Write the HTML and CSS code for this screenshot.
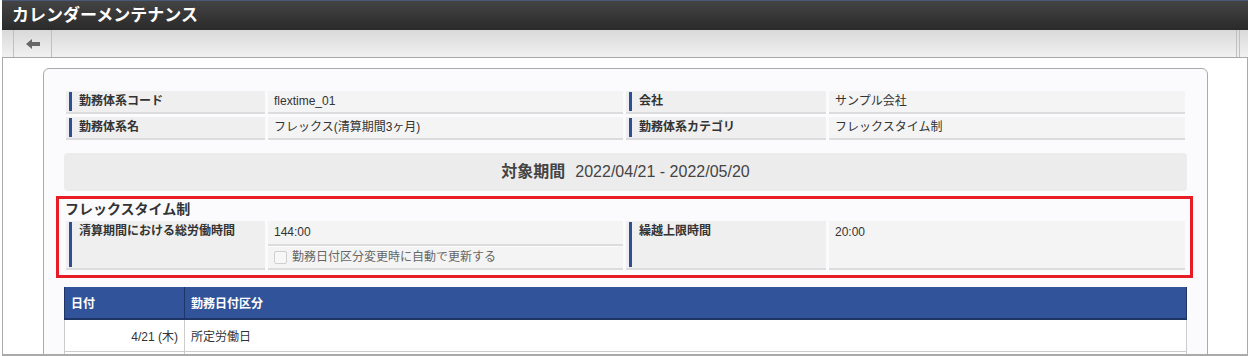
FILE: index.html
```html
<!DOCTYPE html>
<html lang="ja">
  <head>
    <meta charset="UTF-8" />
    <title>カレンダーメンテナンス</title>
    <link rel="stylesheet" href="styles.css">
  </head>
  <body>
    <div class="app">
      <div class="titlebar">カレンダーメンテナンス</div>
      <div class="toolbar">
        <div class="toolbar-button">
          <svg width="14" height="10" viewBox="0 0 14 10">
            <path d="M0 5 L6 0 V3 H14 V7 H6 V10 Z" fill="#666" />
          </svg>
        </div>
        <div class="toolbar-end"></div>
      </div>

      <div class="main">
        <div class="card">
          <div class="info-grid">
            <div class="label"><span>勤務体系コード</span></div>
            <div class="value">flextime_01</div>
            <div class="label"><span>会社</span></div>
            <div class="value">サンプル会社</div>

            <div class="label"><span>勤務体系名</span></div>
            <div class="value">フレックス(清算期間3ヶ月)</div>
            <div class="label"><span>勤務体系カテゴリ</span></div>
            <div class="value">フレックスタイム制</div>
          </div>

          <div class="period"><strong>対象期間</strong>2022/04/21 - 2022/05/20</div>

          <div class="flex-section">
            <h2 class="section-title">フレックスタイム制</h2>
            <div class="info-grid">
              <div class="label"><span>清算期間における総労働時間</span></div>
              <div class="value-stack">
                <div class="value value-top">144:00</div>
                <div class="value value-muted"><span class="checkbox"></span>勤務日付区分変更時に自動で更新する</div>
              </div>
              <div class="label"><span>繰越上限時間</span></div>
              <div class="value value-top">20:00</div>
            </div>
          </div>

          <table class="calendar">
            <tr>
              <th class="col-date">日付</th>
              <th>勤務日付区分</th>
            </tr>
            <tr>
              <td class="col-date">4/21 (木)</td>
              <td>所定労働日</td>
            </tr>
            <tr>
              <td class="col-date"></td>
              <td></td>
            </tr>
          </table>
        </div>
      </div>
    </div>
  </body>
</html>
```

FILE: styles.css
```css
* {
  margin: 0;
  padding: 0;
  box-sizing: border-box;
}

body {
  font-family: "Liberation Sans", "Noto Sans CJK JP", sans-serif;
  color: #333;
  background: #fff;
}

.app {
  width: 1246px;
  margin-left: 2px;
}

.titlebar {
  height: 30px;
  border-top: 1px solid #4a5878;
  background: linear-gradient(#444, #2a2a2a);
  color: #fff;
  font-size: 17px;
  font-weight: bold;
  line-height: 29px;
  padding-left: 10px;
}

.toolbar {
  height: 28px;
  display: flex;
  background: linear-gradient(#d9d9d9, #f1f1f1);
  border-bottom: 1px solid #a8a8a8;
}

.toolbar-button {
  width: 39px;
  margin-left: 11px;
  border-left: 1px solid #c0c0c0;
  border-right: 1px solid #c0c0c0;
  display: flex;
  align-items: center;
  justify-content: center;
}

.toolbar-end {
  margin-left: auto;
  margin-right: 8px;
  width: 4px;
  border-left: 1px solid #c0c0c0;
  border-right: 1px solid #c0c0c0;
}

.main {
  height: 298px;
  overflow: hidden;
  padding: 10px 0 0 40px;
  border-left: 1px solid #aaa;
  border-right: 1px solid #aaa;
  border-bottom: 2px solid #aaa;
}

.card {
  width: 1165px;
  padding: 22px 20px 0 20px;
  border: 1px solid #aaa;
  border-radius: 6px;
  background: #fbfbfe;
  min-height: 320px;
}

.info-grid {
  display: grid;
  grid-template-columns: 199px 355px 200px 356px;
  gap: 3px;
  padding: 0 2px;
  font-size: 12px;
}

.label {
  display: flex;
  padding: 1px 0 1px 3px;
  background: #efefef;
  border-bottom: 2px solid #dcdcdc;
  font-weight: bold;
}

.label span {
  flex: 1;
  border-left: 3px solid #2f4f93;
  padding-left: 7px;
  line-height: 19px;
}

.value {
  padding: 0 6px;
  line-height: 21px;
  background: #f4f4f4;
  border-bottom: 2px solid #dcdcdc;
}

.value-top {
  line-height: 23px;
}

.value-stack {
  display: flex;
  flex-direction: column;
  gap: 1px;
}

.value-muted {
  color: #666;
  display: flex;
  align-items: center;
}

.checkbox {
  width: 13px;
  height: 13px;
  margin-right: 5px;
  border: 1px solid #cfcfcf;
  border-radius: 2px;
  background: #f7f7f7;
}

.period {
  margin-top: 13px;
  height: 38px;
  line-height: 38px;
  text-align: center;
  background: #ececec;
  border-radius: 4px;
  font-size: 16px;
  color: #444;
}

.period strong {
  margin-right: 10px;
}

.flex-section {
  margin: 5px -6px 0 -8px;
  border: 3px solid #e81c24;
  padding: 0 3px 5px 5px;
}

.section-title {
  font-size: 14px;
  line-height: 20px;
  margin-bottom: 2px;
  padding-left: 1px;
  color: #333;
}

.calendar {
  margin-top: 9px;
  width: 100%;
  border-collapse: collapse;
  font-size: 12px;
  background: #fff;
}

.calendar th {
  height: 32px;
  padding: 0 6px;
  text-align: left;
  color: #fff;
  background: #30539a;
  border-left: 1px solid #1f3566;
  border-right: 1px solid #1f3566;
  border-bottom: 2px solid #1f3566;
}

.calendar td {
  height: 32px;
  padding: 0 6px;
  border: 1px solid #ccc;
}

.calendar .col-date {
  width: 120px;
}

.calendar td.col-date {
  text-align: right;
}
```
